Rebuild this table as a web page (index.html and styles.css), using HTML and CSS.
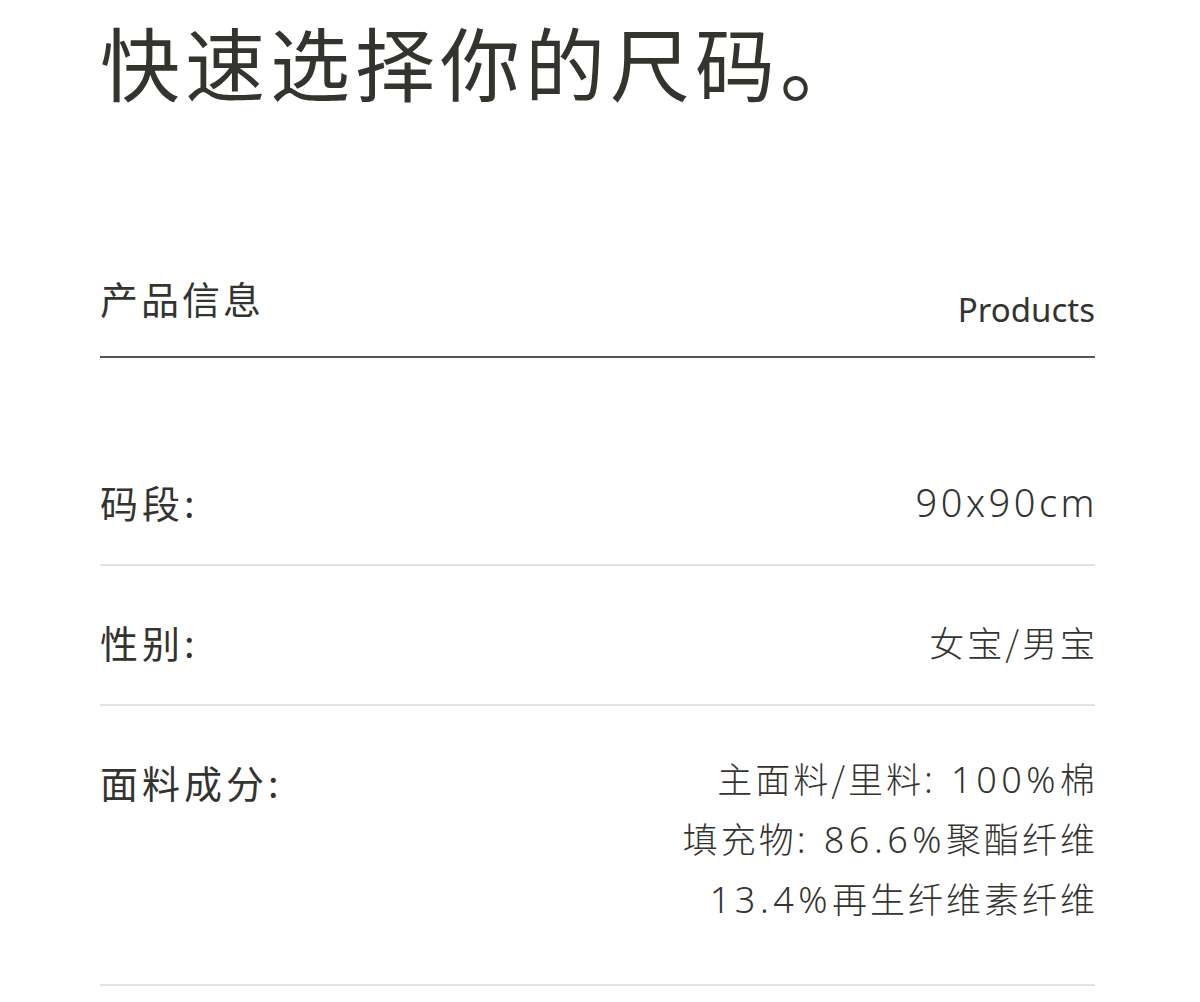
FILE: index.html
```html
<!DOCTYPE html>
<html lang="zh-CN">
<head>
<meta charset="utf-8">
<title>快速选择你的尺码</title>
<link rel="stylesheet" href="styles.css">
</head>
<body>
<main class="page">
  <h1 class="title">快速选择你的尺码。</h1>
  <section class="info">
    <header class="info-head">
      <h2 class="info-title">产品信息</h2>
      <span class="info-sub">Products</span>
    </header>
    <div class="row">
      <div class="label">码段:</div>
      <div class="value"><p class="num">90x90cm</p></div>
    </div>
    <div class="row">
      <div class="label">性别:</div>
      <div class="value"><p>女宝/男宝</p></div>
    </div>
    <div class="row row-last">
      <div class="label">面料成分:</div>
      <div class="value">
        <p>主面料/里料<span class="lat">: 100%</span>棉</p>
        <p>填充物<span class="lat">: 86.6%</span>聚酯纤维</p>
        <p><span class="lat">13.4%</span>再生纤维素纤维</p>
      </div>
    </div>
  </section>
</main>
</body>
</html>
```
FILE: styles.css
```css
* { box-sizing: border-box; }
html, body { margin: 0; padding: 0; background: #fff; }
body {
  font-family: "Noto Sans CJK SC", "Noto Sans", sans-serif;
  color: #34342f;
}
.page {
  width: 1200px;
  padding: 0 105px 0 100px;
}
.title {
  margin: 0;
  padding-top: 12px;
  font-size: 80px;
  line-height: 96px;
  font-weight: 400;
  letter-spacing: 5px;
  white-space: nowrap;
}
.info { margin-top: 160px; }
.info-head {
  display: flex;
  justify-content: space-between;
  align-items: flex-start;
  border-bottom: 2px solid #555;
  padding-bottom: 26px;
}
.info-title {
  margin: 0;
  padding-top: 5px;
  font-size: 38px;
  line-height: 50px;
  font-weight: 400;
  letter-spacing: 3px;
}
.info-sub {
  font-family: "Noto Sans", sans-serif;
  font-size: 33px;
  line-height: 40px;
  font-weight: 400;
  margin-top: 22px;
}
.row {
  display: flex;
  justify-content: space-between;
  align-items: flex-start;
  padding: 46px 0 32px;
  border-bottom: 2px solid #e2e2e2;
}
.info-head + .row { margin-top: 68px; }
.row-last { padding: 42px 0 56px; }
.label {
  font-size: 38px;
  line-height: 60px;
  font-weight: 400;
  letter-spacing: 4px;
}
.row-last .label { padding-top: 4px; }
.value {
  text-align: right;
  font-weight: 300;
  font-size: 35px;
  line-height: 60px;
  letter-spacing: 3px;
  margin-right: -3px;
}
.value p { margin: 0; height: 60px; }
.value .lat {
  font-family: "Noto Sans", sans-serif;
  font-size: 36px;
  line-height: 40px;
  letter-spacing: 4.5px;
}
.value .num {
  font-family: "Noto Sans", sans-serif;
  font-size: 38px;
  letter-spacing: 3.5px;
}
```
